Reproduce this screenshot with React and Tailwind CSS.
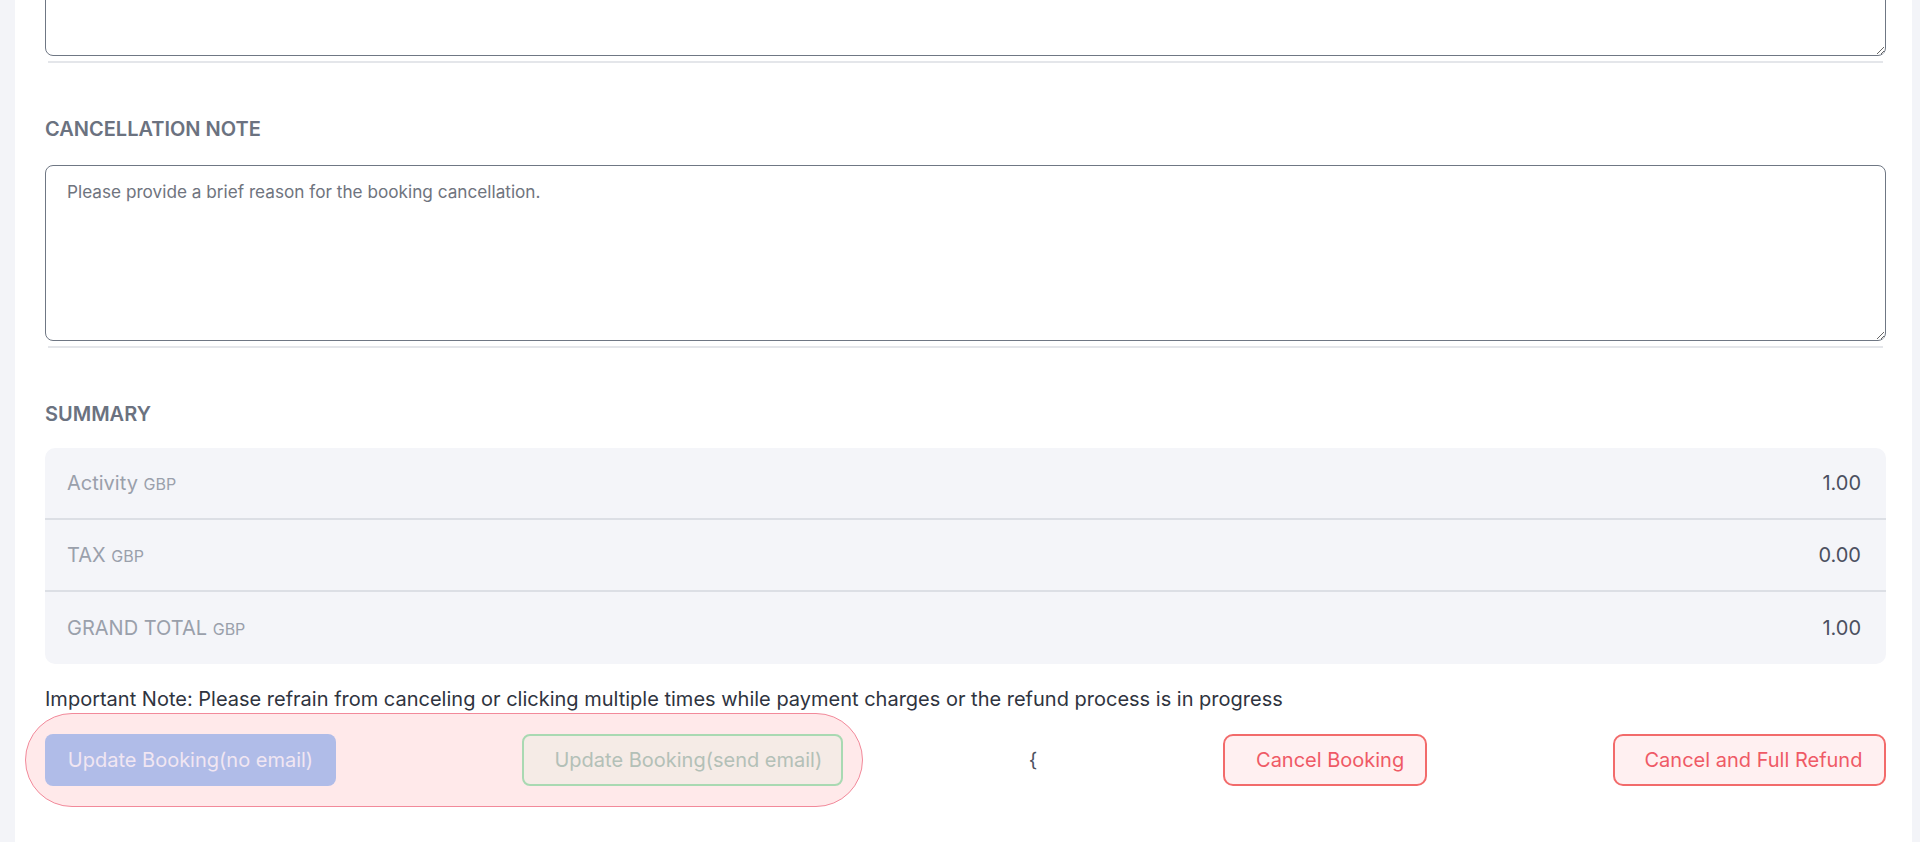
import React from "react";

const rows = [
  { label: "Activity", value: "1.00" },
  { label: "TAX", value: "0.00" },
  { label: "GRAND TOTAL", value: "1.00" },
];

const SummaryRow = ({ label, value, last }) => (
  <div
    className={`flex h-[72px] items-center justify-between pl-[22px] pr-[25px] ${
      last ? "" : "border-b-2 border-[#dcdfe5]"
    }`}
  >
    <span className="text-[20px] text-[#9aa0ab]">
      {label} <span className="text-[16px] uppercase">GBP</span>
    </span>
    <span className="text-[20px] text-[#4b5060]">{value}</span>
  </div>
);

export default function App() {
  return (
    <div
      className="flex h-[842px] overflow-hidden bg-[#f3f4f8]"
      style={{ fontFamily: "Inter, 'Liberation Sans', sans-serif" }}
    >
      <div className="ml-[15px] w-[1897px] bg-white pl-[30px] pr-[26px]">
        {/* previous field, scrolled mostly out of view */}
        <textarea
          className="-mt-[64px] block h-[120px] w-full rounded-lg border-[1.5px] border-[#6f7784] bg-white outline-none"
          defaultValue=""
        />
        <div className="mx-[3px] mt-[5px] h-[2px] bg-[#e4e6ea]" />

        {/* Cancellation note */}
        <h3 className="mt-[54px] text-[20px] font-semibold uppercase leading-[24px] text-[#6b7280]">
          Cancellation Note
        </h3>
        <textarea
          className="mt-[24px] block h-[176px] w-full rounded-lg border-[1.5px] border-[#6f7784] bg-white px-[21px] py-[13px] text-[17.2px] text-gray-700 outline-none placeholder:text-[#6f747e]"
          placeholder="Please provide a brief reason for the booking cancellation."
        />
        <div className="mx-[3px] mt-[5px] h-[2px] bg-[#e4e6ea]" />

        {/* Summary */}
        <h3 className="mt-[54px] text-[20px] font-semibold uppercase leading-[24px] text-[#6b7280]">
          Summary
        </h3>
        <div className="mt-[22px] rounded-[10px] bg-[#f4f5f9]">
          {rows.map((r, i) => (
            <SummaryRow key={r.label} {...r} last={i === rows.length - 1} />
          ))}
        </div>

        <p className="mt-[23px] text-[20px] leading-[24px] text-[#2f3440]">
          Important Note: Please refrain from canceling or clicking multiple
          times while payment charges or the refund process is in progress
        </p>

        {/* Actions */}
        <div className="relative mt-[23px] flex items-center justify-between">
          <div className="absolute -left-[20px] -top-[21px] h-[94px] w-[838px] rounded-full border border-[#f2899a] bg-[#ffe9ea]" />
          <button
            disabled
            className="relative h-[52px] w-[291px] rounded-lg bg-[#b0bce8] text-[20px] text-[#f1e6f2]"
          >
            Update Booking(no email)
          </button>
          <button
            disabled
            className="relative h-[52px] w-[321px] rounded-lg border-2 border-[#a9d9b2] bg-[#f5ebe6] pl-[12px] text-[20px] text-[#b3c0b7]"
          >
            Update Booking(send email)
          </button>
          <span className="text-[20px] text-[#4b5060]">{"{"}</span>
          <button className="h-[52px] w-[204px] rounded-[10px] border-2 border-[#f26b6b] bg-[#fff0f1] pl-[10px] text-[20px] text-[#ef5a66]">
            Cancel Booking
          </button>
          <button className="h-[52px] w-[273px] rounded-[10px] border-2 border-[#f26b6b] bg-[#fff0f1] pl-[8px] text-[20px] text-[#ef5a66]">
            Cancel and Full Refund
          </button>
        </div>
      </div>
    </div>
  );
}
